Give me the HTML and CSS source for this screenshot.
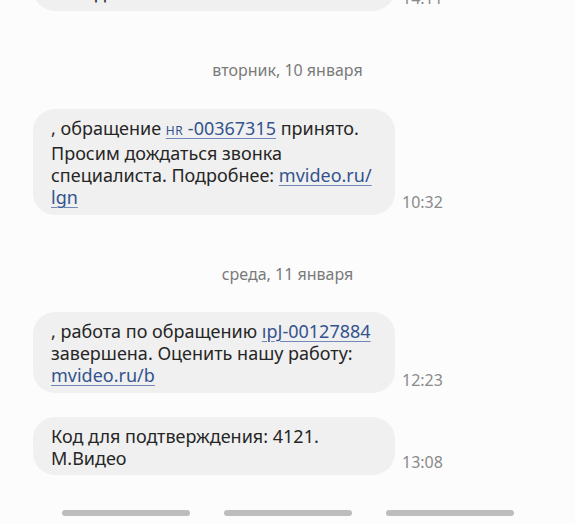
FILE: index.html
```html
<!DOCTYPE html>
<html lang="ru">
<head>
<meta charset="utf-8">
<title>Сообщения</title>
<link rel="stylesheet" href="styles.css">
</head>
<body>
<div class="thread">
  <div class="row row-first">
    <div class="bubble">Код для подтверждения: 6527.<br>М.Видео</div>
    <div class="time">14:11</div>
  </div>

  <div class="date date-first">вторник, 10 января</div>

  <div class="row">
    <div class="bubble">, обращение <a class="link"><span class="small">HR</span> -00367315</a> принято.<br>Просим дождаться звонка<br>специалиста. Подробнее: <a class="link">mvideo.ru/</a><br><a class="link">lgn</a></div>
    <div class="time">10:32</div>
  </div>

  <div class="date date-second">среда, 11 января</div>

  <div class="row">
    <div class="bubble">, работа по обращению <a class="link">ıpJ-00127884</a><br>завершена. Оценить нашу работу:<br><a class="link">mvideo.ru/b</a></div>
    <div class="time">12:23</div>
  </div>

  <div class="row row-last">
    <div class="bubble">Код для подтверждения: 4121.<br>М.Видео</div>
    <div class="time">13:08</div>
  </div>

  <div class="navbar">
    <span class="bar"></span>
    <span class="bar"></span>
    <span class="bar"></span>
  </div>
</div>
</body>
</html>
```

FILE: styles.css
```css
html, body {
  margin: 0;
  padding: 0;
  background: #fcfcfc;
  overflow: hidden;
}

body {
  width: 575px;
  height: 524px;
  font-family: "Noto Sans", Roboto, sans-serif;
}

.thread {
  display: flex;
  flex-direction: column;
}

.row {
  display: flex;
  align-items: flex-end;
  gap: 7px;
  padding-left: 33px;
}

.row-first {
  margin-top: -48px;
}

.row-last {
  margin-top: 24px;
}

.bubble {
  width: 362px;
  box-sizing: border-box;
  background: #f0f0f0;
  border-radius: 22px;
  padding: 8px 16px 6px 18px;
  font-size: 18px;
  line-height: 22.3px;
  color: #262626;
}

.time {
  font-size: 16px;
  line-height: 18px;
  color: #8a8a8a;
  margin-bottom: 4px;
}

.link {
  color: #34538f;
  text-decoration: underline;
  text-decoration-color: #7088ba;
  text-underline-offset: 3px;
  text-decoration-thickness: 1px;
}

.small {
  font-size: 12px;
  letter-spacing: 0.5px;
}

.date {
  text-align: center;
  font-size: 16px;
  line-height: 20px;
  color: #7a7a7a;
}

.date-first {
  margin: 49px 0 29px;
}

.date-second {
  margin: 49px 0 28px;
}

.navbar {
  display: flex;
  justify-content: center;
  gap: 34px;
  margin-top: 35px;
}

.bar {
  display: block;
  width: 128px;
  height: 6px;
  border-radius: 3px;
  background: #bdbdbd;
}
```
